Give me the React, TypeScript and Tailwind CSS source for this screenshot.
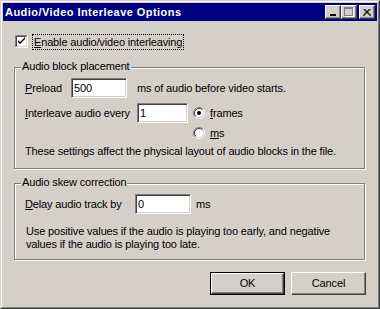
import type { ReactNode } from "react"

const sunken =
  "border border-t-[#808080] border-l-[#808080] border-r-white border-b-white shadow-[inset_1px_1px_0_#404040,inset_-1px_-1px_0_#d4d0c8]"

const raised =
  "border border-t-white border-l-white border-r-[#404040] border-b-[#404040] shadow-[inset_-1px_-1px_0_#808080]"

const Group = ({ title, className, children }: { title: string; className: string; children: ReactNode }) => {
  return (
    <div className={`relative border border-[#808080] shadow-[inset_1px_1px_0_#fff,1px_1px_0_#fff] ${className}`}>
      <span className="absolute left-[6px] top-[-8px] bg-[#d4d0c8] px-[1px] leading-[13px]">{title}</span>
      <div className="flex flex-col pl-[10px]">{children}</div>
    </div>
  )
}

const Field = ({ value, className }: { value: string; className: string }) => (
  <div className={`h-[20px] shrink-0 bg-white flex items-center pl-[2px] ${sunken} ${className}`}>{value}</div>
)

const Radio = ({ checked }: { checked?: boolean }) => (
  <svg width="12" height="12" viewBox="0 0 12 12" className="shrink-0">
    <circle cx="6" cy="6" r="4.5" fill="#fff" />
    <path d="M2.11 9.89 A5.5 5.5 0 0 1 9.89 2.11" fill="none" stroke="#808080" />
    <path d="M9.89 2.11 A5.5 5.5 0 0 1 2.11 9.89" fill="none" stroke="#fff" />
    <path d="M2.82 9.18 A4.5 4.5 0 0 1 9.18 2.82" fill="none" stroke="#404040" />
    <path d="M9.18 2.82 A4.5 4.5 0 0 1 2.82 9.18" fill="none" stroke="#d4d0c8" />
    {checked && <circle cx="6" cy="6" r="2" fill="#000" />}
  </svg>
)

const CaptionButton = ({ children, className = "" }: { children: ReactNode; className?: string }) => (
  <div className={`w-[16px] h-[14px] bg-[#d4d0c8] flex items-center justify-center ${raised} ${className}`}>{children}</div>
)

export default function App() {
  return (
    <div className="w-[380px] h-[309px] bg-[#d4d0c8] border border-[#d4d0c8] border-r-[#404040] border-b-[#404040] font-['Liberation_Sans',Arial,sans-serif] text-[11px] text-black tracking-[-0.15px] select-none">
      <div className="h-full border border-white border-r-[#808080] border-b-[#808080] p-px flex flex-col">
        {/* title bar */}
        <div className="h-[18px] bg-[#000080] flex items-center pl-[2px] pr-[2px]">
          <span className="text-white font-bold tracking-[0.45px] flex-1">Audio/Video Interleave Options</span>
          <CaptionButton>
            <div className="w-[6px] h-[2px] bg-black mt-[6px] mr-[1px]" />
          </CaptionButton>
          <CaptionButton>
            <div className="w-[9px] h-[9px] border border-[#808080] border-t-2 shadow-[1px_1px_0_#fff] mb-[1px] mr-[1px]" />
          </CaptionButton>
          <CaptionButton className="ml-[2px]">
            <svg width="8" height="7" viewBox="0 0 8 7" className="mr-[1px]">
              <path d="M0.5 0 L7.5 7 M1.5 0 L8.5 7 M7.5 0 L0.5 7 M6.5 0 L-0.5 7" stroke="#000" strokeWidth="1" />
            </svg>
          </CaptionButton>
        </div>

        {/* body */}
        <div className="flex flex-col pl-[11px] pr-[12px]">
          <div className="mt-[14px] h-[13px] flex items-center ml-[1px]">
            <svg width="13" height="13" viewBox="0 0 13 13" className="shrink-0">
              <rect x="0" y="0" width="13" height="13" fill="#fff" />
              <path d="M0.5 12.5 V0.5 H12.5" fill="none" stroke="#808080" />
              <path d="M0.5 12.5 H12.5 V0.5" fill="none" stroke="#fff" />
              <path d="M1.5 11.5 V1.5 H11.5" fill="none" stroke="#404040" />
              <path d="M1.5 11.5 H11.5 V1.5" fill="none" stroke="#d4d0c8" />
              <path d="M3 5 V7 L5 9 L10 4 V2 L5 7 Z" fill="#000" />
            </svg>
            <span className="ml-[4px] border border-dotted border-black px-[1px] leading-[14px]">
              <u className="underline-offset-[1px]">E</u>nable audio/video interleaving
            </span>
          </div>

          <Group title="Audio block placement" className="mt-[19px] h-[102px]">
            <div className="mt-[10px] h-[20px] flex items-center">
              <span className="w-[46px] shrink-0">
                <u className="underline-offset-[1px]">P</u>reload
              </span>
              <Field value="500" className="w-[56px]" />
              <span className="ml-[10px]">ms of audio before video starts.</span>
            </div>
            <div className="mt-[5px] flex">
              <div className="h-[20px] flex items-center">
                <span className="w-[112px] shrink-0">
                  <u className="underline-offset-[1px]">I</u>nterleave audio every
                </span>
                <Field value="1" className="w-[51px]" />
              </div>
              <div className="ml-[5px] flex flex-col">
                <div className="h-[20px] flex items-center gap-[5px]">
                  <Radio checked />
                  <span>
                    <u className="underline-offset-[1px]">f</u>rames
                  </span>
                </div>
                <div className="h-[20px] flex items-center gap-[5px]">
                  <Radio />
                  <span>
                    <u className="underline-offset-[1px]">m</u>s
                  </span>
                </div>
              </div>
            </div>
            <div className="mt-[2px] leading-[13px]">
              These settings affect the physical layout of audio blocks in the file.
            </div>
          </Group>

          <Group title="Audio skew correction" className="mt-[14px] h-[77px]">
            <div className="mt-[10px] h-[20px] flex items-center">
              <span className="w-[110px] shrink-0">
                <u className="underline-offset-[1px]">D</u>elay audio track by
              </span>
              <Field value="0" className="w-[56px]" />
              <span className="ml-[5px]">ms</span>
            </div>
            <div className="mt-[11px] leading-[13px] pl-[1px]">
              Use positive values if the audio is playing too early, and negative
              <br />
              values if the audio is playing too late.
            </div>
          </Group>

          <div className="mt-[12px] flex justify-end gap-[6px] -mr-px">
            <div className="w-[75px] h-[23px] border border-black">
              <div className={`h-full flex items-center justify-center ${raised}`}>OK</div>
            </div>
            <div className={`w-[75px] h-[23px] flex items-center justify-center ${raised}`}>Cancel</div>
          </div>
        </div>
      </div>
    </div>
  )
}
